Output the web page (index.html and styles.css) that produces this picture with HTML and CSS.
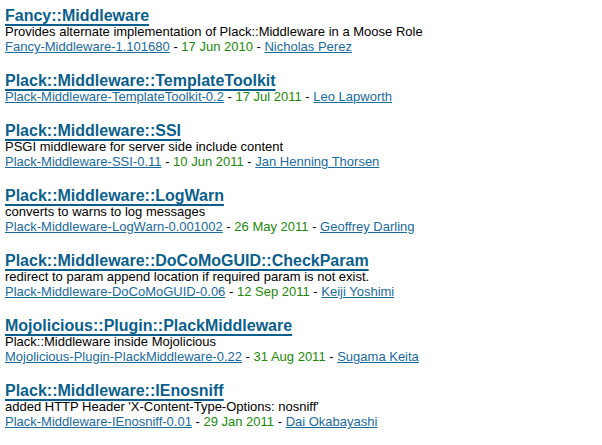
FILE: index.html
```html
<!DOCTYPE html>
<html>
<head>
<meta charset="utf-8">
<link rel="stylesheet" href="styles.css">
</head>
<body>
<div class="results">
  <div class="entry">
    <a class="title" href="#">Fancy::Middleware</a>
    <div class="desc">Provides alternate implementation of Plack::Middleware in a Moose Role</div>
    <div class="meta"><a href="#">Fancy-Middleware-1.101680</a> - <span class="date">17 Jun 2010</span> - <a href="#">Nicholas Perez</a></div>
  </div>
  <div class="entry">
    <a class="title" href="#">Plack::Middleware::TemplateToolkit</a>
    <div class="meta"><a href="#">Plack-Middleware-TemplateToolkit-0.2</a> - <span class="date">17 Jul 2011</span> - <a href="#">Leo Lapworth</a></div>
  </div>
  <div class="entry">
    <a class="title" href="#">Plack::Middleware::SSI</a>
    <div class="desc">PSGI middleware for server side include content</div>
    <div class="meta"><a href="#">Plack-Middleware-SSI-0.11</a> - <span class="date">10 Jun 2011</span> - <a href="#">Jan Henning Thorsen</a></div>
  </div>
  <div class="entry">
    <a class="title" href="#">Plack::Middleware::LogWarn</a>
    <div class="desc">converts to warns to log messages</div>
    <div class="meta"><a href="#">Plack-Middleware-LogWarn-0.001002</a> - <span class="date">26 May 2011</span> - <a href="#">Geoffrey Darling</a></div>
  </div>
  <div class="entry">
    <a class="title" href="#">Plack::Middleware::DoCoMoGUID::CheckParam</a>
    <div class="desc">redirect to param append location if required param is not exist.</div>
    <div class="meta"><a href="#">Plack-Middleware-DoCoMoGUID-0.06</a> - <span class="date">12 Sep 2011</span> - <a href="#">Keiji Yoshimi</a></div>
  </div>
  <div class="entry">
    <a class="title" href="#">Mojolicious::Plugin::PlackMiddleware</a>
    <div class="desc">Plack::Middleware inside Mojolicious</div>
    <div class="meta"><a href="#">Mojolicious-Plugin-PlackMiddleware-0.22</a> - <span class="date">31 Aug 2011</span> - <a href="#">Sugama Keita</a></div>
  </div>
  <div class="entry">
    <a class="title" href="#">Plack::Middleware::IEnosniff</a>
    <div class="desc">added HTTP Header 'X-Content-Type-Options: nosniff'</div>
    <div class="meta"><a href="#">Plack-Middleware-IEnosniff-0.01</a> - <span class="date">29 Jan 2011</span> - <a href="#">Dai Okabayashi</a></div>
  </div>
</div>
</body>
</html>
```

FILE: styles.css
```css
html, body {
  margin: 0;
  background: #ffffff;
}
body {
  font-family: "Liberation Sans", Arial, sans-serif;
  color: #000000;
  padding: 8px 5px 0 5px;
}
.results {
  display: flex;
  flex-direction: column;
  gap: 19px;
}
.entry {
  display: flex;
  flex-direction: column;
  align-items: flex-start;
}
.title {
  font-size: 16px;
  font-weight: bold;
  line-height: 16px;
  color: #0b5f8c;
  text-decoration: underline;
  text-decoration-thickness: 2px;
  text-underline-offset: 3px;
}
.desc, .meta {
  font-size: 13px;
  line-height: 15px;
}
.meta a {
  color: #1a6a9c;
  text-decoration: underline;
}
.date {
  color: #23880a;
}
```
